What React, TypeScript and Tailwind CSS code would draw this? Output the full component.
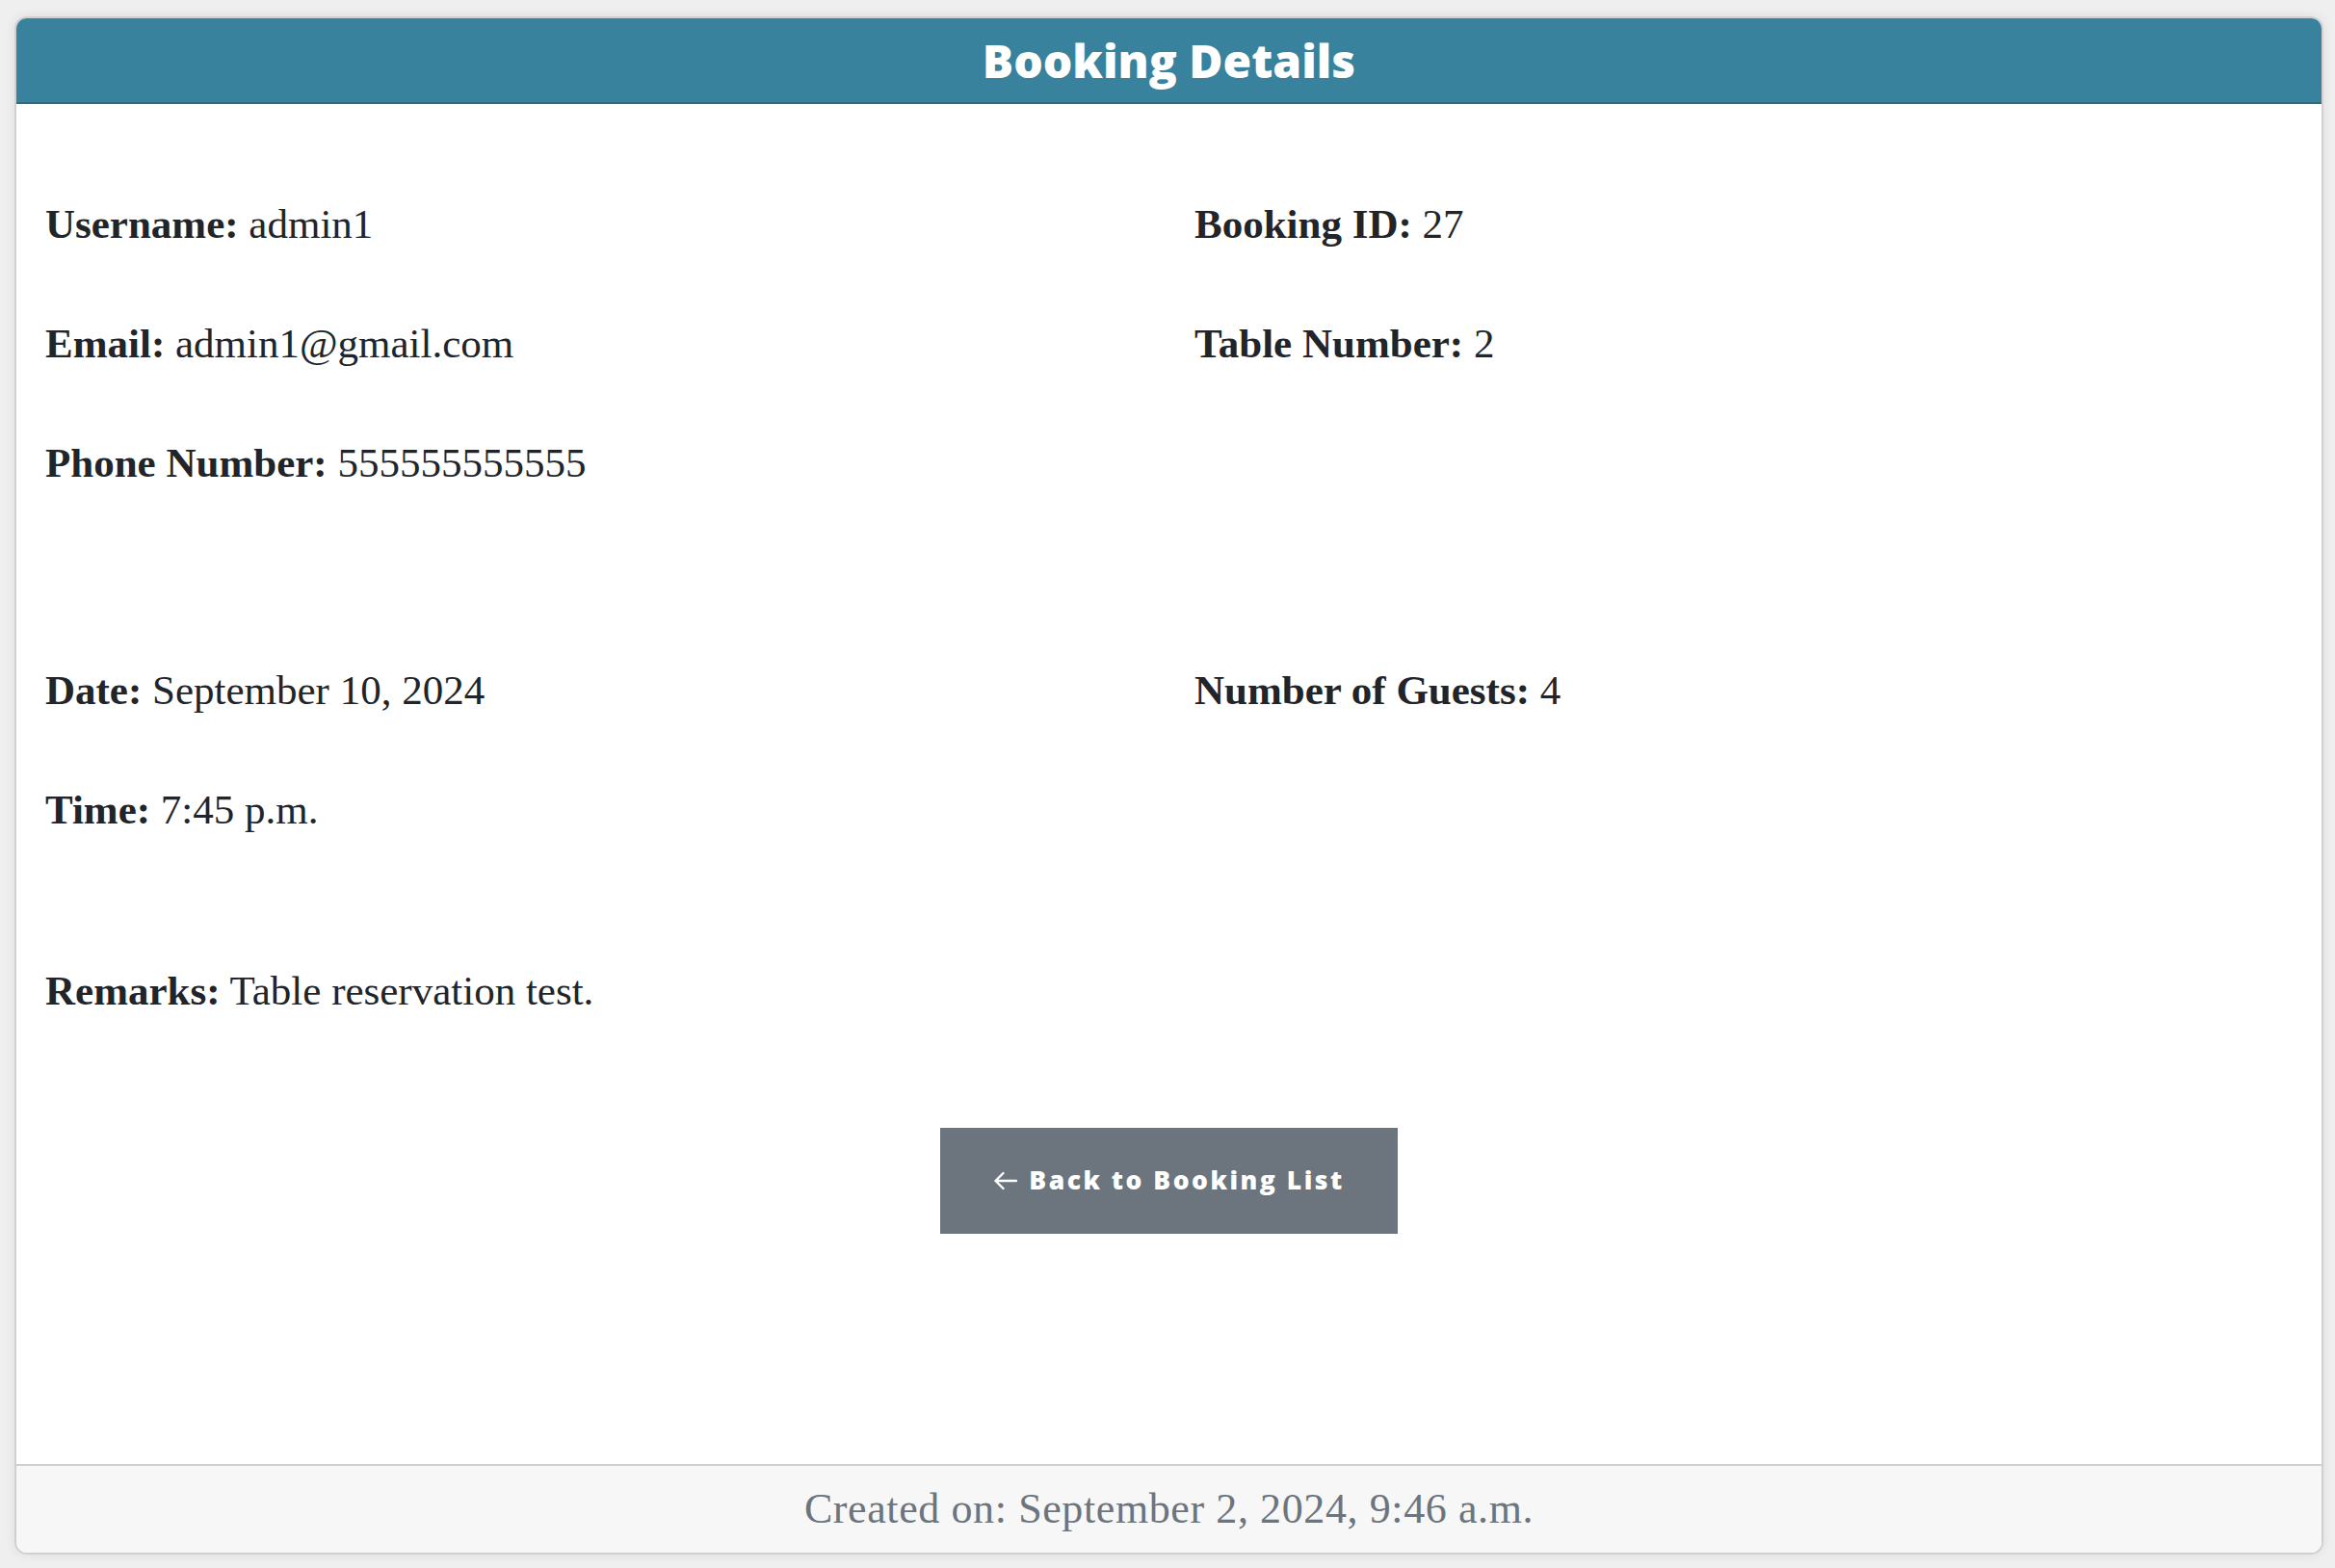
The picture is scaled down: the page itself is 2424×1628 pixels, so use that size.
import { ReactElement } from 'react'

type Field = { label: string; value: string }

const leftTop: Field[] = [
	{ label: 'Username:', value: 'admin1' },
	{ label: 'Email:', value: 'admin1@gmail.com' },
	{ label: 'Phone Number:', value: '555555555555' },
]

const rightTop: Field[] = [
	{ label: 'Booking ID:', value: '27' },
	{ label: 'Table Number:', value: '2' },
]

const leftBottom: Field[] = [
	{ label: 'Date:', value: 'September 10, 2024' },
	{ label: 'Time:', value: '7:45 p.m.' },
]

const rightBottom: Field[] = [{ label: 'Number of Guests:', value: '4' }]

const Row = ({ label, value }: Field): ReactElement => (
	<p className="text-[43px] leading-[60px] text-[#212529] whitespace-nowrap">
		<strong className="font-bold">{label}</strong> {value}
	</p>
)

const Column = ({ items }: { items: Field[] }): ReactElement => (
	<div className="flex flex-col gap-[64px]">
		{items.map((item) => (
			<Row key={item.label} {...item} />
		))}
	</div>
)

const App = (): ReactElement => {
	return (
		<div className="min-h-screen h-screen flex bg-[#efefef] pt-[17px] pb-[14px] pl-[15px] pr-[12px] font-['Liberation_Serif',serif]">
			<div className="flex-1 flex flex-col bg-white border-2 border-[#d0d0d0] rounded-[13px] overflow-hidden shadow-[0_0_12px_rgba(0,0,0,0.08)]">
				<div className="h-[89px] shrink-0 flex items-center justify-center bg-[#39829d] border-b-2 border-[#2c6b80]">
					<h1 className="font-['Open_Sans',sans-serif] font-extrabold text-[48px] leading-none text-white">
						Booking Details
					</h1>
				</div>

				<div className="flex-1 flex flex-col px-[30px] pt-[95px]">
					<div className="grid grid-cols-2 gap-x-[53px]">
						<Column items={leftTop} />
						<Column items={rightTop} />
					</div>

					<div className="grid grid-cols-2 gap-x-[53px] mt-[176px]">
						<Column items={leftBottom} />
						<Column items={rightBottom} />
					</div>

					<div className="mt-[128px]">
						<Row label="Remarks:" value="Table reservation test." />
					</div>

					<button className="mt-[112px] mx-auto w-[475px] h-[110px] shrink-0 flex items-center justify-center gap-[12px] bg-[#6c757d] text-white font-['Open_Sans',sans-serif] font-extrabold text-[26.5px] tracking-[2.5px]">
						<svg width="25" height="20" viewBox="0 0 25 20" fill="none">
							<path
								d="M24 10H2.5M10.5 2L2.5 10L10.5 18"
								stroke="white"
								strokeWidth="2.4"
								strokeLinecap="round"
								strokeLinejoin="round"
							/>
						</svg>
						<span>Back to Booking List</span>
					</button>
				</div>

				<div className="h-[92px] shrink-0 flex items-center justify-center bg-[#f7f7f7] border-t-2 border-[#cfcfcf]">
					<p className="text-[44px] leading-none tracking-[0.6px] text-[#6c757d]">
						Created on: September 2, 2024, 9:46 a.m.
					</p>
				</div>
			</div>
		</div>
	)
}

export default App
